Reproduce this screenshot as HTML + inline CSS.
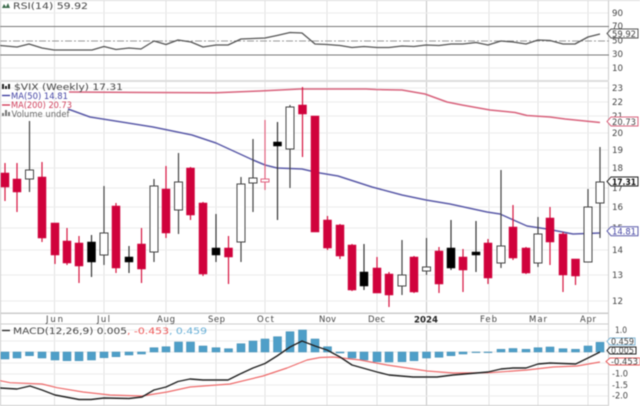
<!DOCTYPE html>
<html><head><meta charset="utf-8"><style>
html,body{margin:0;padding:0;background:#fff;width:640px;height:406px;overflow:hidden}
svg{display:block;filter:blur(.45px)}
text{font-family:"DejaVu Sans","Liberation Sans",sans-serif;font-size:8.5px;fill:#444}
.g line{stroke:#ececec;stroke-width:1}
.v line{stroke:#e2e2e2;stroke-width:1}
.r line{stroke:#d6133f;stroke-width:1.2}.r rect{fill:#d0023c;stroke:#d0023c;stroke-width:.5}
.w line{stroke:#444;stroke-width:1.2}.w rect{fill:#fff;stroke:#444;stroke-width:1}
.b line{stroke:#333;stroke-width:1.2}.b rect{fill:#000;stroke:#000;stroke-width:.5}
.m rect{fill:#4f9fc8;stroke:#3f8bb2;stroke-width:.5}
polyline{fill:none;stroke-linejoin:round}
</style></head><body>
<svg width="640" height="406" viewBox="0 0 640 406" xmlns="http://www.w3.org/2000/svg">
<rect width="640" height="406" fill="#fff"/>
<g class="v">
<line x1="54.5" y1="0" x2="54.5" y2="313"/><line x1="104" y1="0" x2="104" y2="313"/><line x1="166" y1="0" x2="166" y2="313"/><line x1="216" y1="0" x2="216" y2="313"/><line x1="265" y1="0" x2="265" y2="313"/><line x1="327" y1="0" x2="327" y2="313"/><line x1="377" y1="0" x2="377" y2="313"/><line x1="489" y1="0" x2="489" y2="313"/><line x1="538" y1="0" x2="538" y2="313"/><line x1="588" y1="0" x2="588" y2="313"/>
<line x1="54.5" y1="324" x2="54.5" y2="406"/><line x1="104" y1="324" x2="104" y2="406"/><line x1="166" y1="324" x2="166" y2="406"/><line x1="216" y1="324" x2="216" y2="406"/><line x1="265" y1="324" x2="265" y2="406"/><line x1="327" y1="324" x2="327" y2="406"/><line x1="377" y1="324" x2="377" y2="406"/><line x1="489" y1="324" x2="489" y2="406"/><line x1="538" y1="324" x2="538" y2="406"/><line x1="588" y1="324" x2="588" y2="406"/>
<line x1="426.5" y1="0" x2="426.5" y2="313" style="stroke:#c4c4c4"/><line x1="426.5" y1="324" x2="426.5" y2="406" style="stroke:#c4c4c4"/>
</g>
<g class="g">
<line x1="0" y1="13" x2="608" y2="13"/><line x1="0" y1="68" x2="608" y2="68"/>
<line x1="0" y1="88" x2="608" y2="88"/><line x1="0" y1="102" x2="608" y2="102"/><line x1="0" y1="116" x2="608" y2="116"/><line x1="0" y1="133" x2="608" y2="133"/><line x1="0" y1="150" x2="608" y2="150"/><line x1="0" y1="168" x2="608" y2="168"/><line x1="0" y1="188" x2="608" y2="188"/><line x1="0" y1="207" x2="608" y2="207"/><line x1="0" y1="228" x2="608" y2="228"/><line x1="0" y1="250" x2="608" y2="250"/><line x1="0" y1="275" x2="608" y2="275"/><line x1="0" y1="301" x2="608" y2="301"/>
<line x1="0" y1="330" x2="608" y2="330"/><line x1="0" y1="341" x2="608" y2="341"/><line x1="0" y1="352" x2="608" y2="352"/><line x1="0" y1="363" x2="608" y2="363"/><line x1="0" y1="374" x2="608" y2="374"/><line x1="0" y1="385" x2="608" y2="385"/><line x1="0" y1="396" x2="608" y2="396"/>
</g>
<!-- frame -->
<rect x="0" y="0" width="640" height="1" fill="#ddd"/>
<rect x="0" y="0" width="1" height="406" fill="#ccc"/>
<rect x="608" y="0" width="1" height="406" fill="#ccc"/>
<rect x="0" y="80" width="609" height="2" fill="#ddd"/>
<rect x="0" y="312.5" width="609" height="1.5" fill="#ccc"/>
<rect x="0" y="323.5" width="609" height="1" fill="#ccc"/>
<rect x="0" y="405" width="609" height="1" fill="#ccc"/>
<!-- RSI -->
<line x1="0" y1="26.5" x2="609" y2="26.5" stroke="#777" stroke-width="1"/>
<line x1="0" y1="55" x2="609" y2="55" stroke="#777" stroke-width="1"/>
<line x1="0" y1="41" x2="609" y2="41" stroke="#999" stroke-width="1" stroke-dasharray="7 2 2 2"/>
<polyline stroke="#555" stroke-width="1.3" points="0,45.5 17,47 29,44 42,48 54,50 92,50 104,46.5 116,49.5 129,48 141,49 154,41 166,44.5 178,40 191,42 203,47 216,45 228,45 241,39 253,38.5 265,38 277,35.5 290,32.5 302,33 315,44 327,44.5 340,45.5 352,47.5 364,46.5 377,47.5 389,47.5 402,46 414,46.5 426,45 439,45.5 451,44 463,44 476,42.5 488,45 501,41 513,42 526,44 538,40 550,40.5 563,44 575,44 588,37 600,34"/>
<path d="M2 8 L4 4 L6 7 L8 3 L10 8 Z" fill="#3a6a4a"/>
<text x="13" y="9" textLength="75" lengthAdjust="spacingAndGlyphs">RSI(14) 59.92</text>
<!-- MAs -->
<polyline stroke="#d8627c" stroke-width="1.5" points="69,92 150,92.5 216,92.7 260,91 300,89 366,89 376,89.5 402,90 425,94 447,102 462,105 490,110 515,112.5 527,115.5 550,117 565,119 600,122.5"/>
<polyline stroke="#5a5aa8" stroke-width="1.5" points="68,109 90,117 153,127 192,135 216,143 253,160 265,165 277,168 302,169 315,172 320,173 338,176 372,187 402,195 426,200 450,204 487,212 500,214 527,226 547,229 573,234 600,233"/>
<!-- Candles -->
<g class="r"><line x1="5" y1="163" x2="5" y2="201"/><rect x="1" y="173" width="8" height="14"/></g>
<g class="r"><line x1="17" y1="163" x2="17" y2="212"/><rect x="13" y="179" width="8" height="13"/></g>
<g class="w"><line x1="29.5" y1="121" x2="29.5" y2="192"/><rect x="25.5" y="170" width="8" height="9"/></g>
<g class="r"><line x1="42" y1="162" x2="42" y2="242"/><rect x="38" y="177" width="8" height="61"/></g>
<g class="r"><line x1="55" y1="223" x2="55" y2="264"/><rect x="51" y="223" width="8" height="32"/></g>
<g class="r"><line x1="67" y1="228" x2="67" y2="265"/><rect x="63" y="241" width="8" height="22"/></g>
<g class="r"><line x1="79" y1="236" x2="79" y2="283"/><rect x="75" y="243" width="8" height="23"/></g>
<g class="b"><line x1="91.5" y1="235" x2="91.5" y2="277"/><rect x="87.5" y="242" width="8" height="20"/></g>
<g class="w"><line x1="104" y1="186" x2="104" y2="265"/><rect x="100" y="233" width="8" height="22"/></g>
<g class="r"><line x1="116" y1="203" x2="116" y2="273"/><rect x="112" y="206" width="8" height="62"/></g>
<g class="b"><line x1="129" y1="246" x2="129" y2="273"/><rect x="125" y="257" width="8" height="5"/></g>
<g class="r"><line x1="141.5" y1="228" x2="141.5" y2="283"/><rect x="137.5" y="244" width="8" height="25"/></g>
<g class="w"><line x1="154" y1="179" x2="154" y2="262"/><rect x="150" y="186" width="8" height="66"/></g>
<g class="r"><line x1="166" y1="166" x2="166" y2="238"/><rect x="162" y="189" width="8" height="44"/></g>
<g class="w"><line x1="178.5" y1="153" x2="178.5" y2="234"/><rect x="174.5" y="182" width="8" height="28"/></g>
<g class="r"><line x1="190.5" y1="167" x2="190.5" y2="220"/><rect x="186.5" y="168" width="8" height="47"/></g>
<g class="r"><line x1="203" y1="202" x2="203" y2="276"/><rect x="199" y="203" width="8" height="71"/></g>
<g class="b"><line x1="216" y1="214" x2="216" y2="262"/><rect x="212" y="248" width="8" height="7"/></g>
<g class="r"><line x1="228.5" y1="236" x2="228.5" y2="284"/><rect x="224.5" y="248" width="8" height="9"/></g>
<g class="w"><line x1="241" y1="177" x2="241" y2="262"/><rect x="237" y="184" width="8" height="58"/></g>
<g class="w"><line x1="253" y1="139" x2="253" y2="212"/><rect x="249" y="178" width="8" height="5"/></g>
<g><line x1="265" y1="120" x2="265" y2="190" stroke="#e0607e" stroke-width="1.2"/><rect x="261" y="179" width="8" height="3" fill="#fff" stroke="#e0607e"/></g>
<g class="b"><line x1="277.5" y1="122" x2="277.5" y2="220"/><rect x="273.5" y="142" width="8" height="4"/></g>
<g class="w"><line x1="290" y1="105" x2="290" y2="188"/><rect x="286" y="107" width="8" height="42"/></g>
<g class="r"><line x1="302.5" y1="87" x2="302.5" y2="157"/><rect x="298.5" y="105" width="8" height="9"/></g>
<g class="r"><line x1="315" y1="116" x2="315" y2="232"/><rect x="311" y="116" width="8" height="116"/></g>
<g class="r"><line x1="327.5" y1="216" x2="327.5" y2="250"/><rect x="323.5" y="220" width="8" height="28"/></g>
<g class="r"><line x1="340" y1="224" x2="340" y2="259"/><rect x="336" y="225" width="8" height="31"/></g>
<g class="r"><line x1="352" y1="244" x2="352" y2="291"/><rect x="348" y="245" width="8" height="45"/></g>
<g class="b"><line x1="364" y1="244" x2="364" y2="290"/><rect x="360" y="272" width="8" height="14"/></g>
<g class="r"><line x1="377" y1="257" x2="377" y2="293"/><rect x="373" y="268" width="8" height="25"/></g>
<g class="r"><line x1="389" y1="272" x2="389" y2="307"/><rect x="385" y="274" width="8" height="21"/></g>
<g class="w"><line x1="402" y1="240" x2="402" y2="295"/><rect x="398" y="275" width="8" height="11"/></g>
<g class="r"><line x1="414" y1="256" x2="414" y2="293"/><rect x="410" y="257" width="8" height="35"/></g>
<g class="w"><line x1="426.5" y1="238" x2="426.5" y2="275"/><rect x="422.5" y="267" width="8" height="4"/></g>
<g class="r"><line x1="439" y1="247" x2="439" y2="293"/><rect x="435" y="251" width="8" height="33"/></g>
<g class="b"><line x1="451" y1="220" x2="451" y2="270"/><rect x="447" y="248" width="8" height="20"/></g>
<g class="r"><line x1="463" y1="249" x2="463" y2="292"/><rect x="459" y="257" width="8" height="13"/></g>
<g class="b"><line x1="476" y1="221" x2="476" y2="272"/><rect x="472" y="252" width="8" height="3"/></g>
<g class="r"><line x1="488" y1="239" x2="488" y2="284"/><rect x="484" y="243" width="8" height="35"/></g>
<g class="w"><line x1="501" y1="170" x2="501" y2="268"/><rect x="497" y="246" width="8" height="17"/></g>
<g class="r"><line x1="513" y1="205" x2="513" y2="260"/><rect x="509" y="227" width="8" height="31"/></g>
<g class="r"><line x1="526" y1="247" x2="526" y2="274"/><rect x="522" y="248" width="8" height="25"/></g>
<g class="w"><line x1="538" y1="217" x2="538" y2="267"/><rect x="534" y="234" width="8" height="29"/></g>
<g class="r"><line x1="550" y1="207" x2="550" y2="265"/><rect x="546" y="218" width="8" height="24"/></g>
<g class="r"><line x1="563" y1="232" x2="563" y2="292"/><rect x="559" y="234" width="8" height="41"/></g>
<g class="r"><line x1="575.5" y1="259" x2="575.5" y2="285"/><rect x="571.5" y="259" width="8" height="17"/></g>
<g class="w"><line x1="588" y1="189" x2="588" y2="262"/><rect x="584" y="207" width="8" height="55"/></g>
<g class="w"><line x1="600" y1="147" x2="600" y2="238"/><rect x="596" y="182" width="8" height="21"/></g>
<!-- Price legend -->
<path d="M2 84h2v5H2zM5 86h2v3H5zM8 84h2v5H8z" fill="#222"/>
<text x="14" y="90" textLength="109" lengthAdjust="spacingAndGlyphs">$VIX (Weekly) 17.31</text>
<line x1="2" y1="95.5" x2="10" y2="95.5" stroke="#33339a" stroke-width="1.3"/>
<text x="11" y="99" textLength="57" lengthAdjust="spacingAndGlyphs" style="fill:#4545a5">MA(50) 14.81</text>
<line x1="2" y1="105" x2="10" y2="105" stroke="#d0324f" stroke-width="1.3"/>
<text x="11" y="108" textLength="61" lengthAdjust="spacingAndGlyphs" style="fill:#d0405c">MA(200) 20.73</text>
<path d="M2 116v-3h2v3zM5 116v-6h2v6zM8 116v-4h2v4z" fill="#777"/>
<text x="11.5" y="117" textLength="58" lengthAdjust="spacingAndGlyphs" style="fill:#666">Volume undef</text>
<!-- month labels -->
<g>
<text x="46" y="322" textLength="17" lengthAdjust="spacing">Jun</text>
<text x="97" y="322" textLength="13" lengthAdjust="spacing">Jul</text>
<text x="157" y="322" textLength="18" lengthAdjust="spacing">Aug</text>
<text x="208" y="322" textLength="17" lengthAdjust="spacing">Sep</text>
<text x="257" y="322" textLength="17" lengthAdjust="spacing">Oct</text>
<text x="319" y="322" textLength="17" lengthAdjust="spacing">Nov</text>
<text x="368" y="322" textLength="17" lengthAdjust="spacing">Dec</text>
<text x="414" y="322.5" textLength="24" lengthAdjust="spacingAndGlyphs" style="font-weight:700;fill:#222">2024</text>
<text x="480" y="322" textLength="17" lengthAdjust="spacing">Feb</text>
<text x="529" y="322" textLength="18" lengthAdjust="spacing">Mar</text>
<text x="580" y="322" textLength="16" lengthAdjust="spacing">Apr</text>
</g>
<!-- MACD bars -->
<g class="m">
<rect x="1" y="352" width="8" height="7"/><rect x="13" y="352" width="8" height="6"/><rect x="25.5" y="352" width="8" height="3.7"/><rect x="38" y="352" width="8" height="6"/><rect x="51" y="352" width="8" height="8"/><rect x="63" y="352" width="8" height="8.7"/><rect x="75" y="352" width="8" height="8.7"/><rect x="87.5" y="352" width="8" height="8"/><rect x="100" y="352" width="8" height="5.7"/><rect x="112" y="352" width="8" height="4.7"/><rect x="125" y="352" width="8" height="3"/><rect x="137.5" y="352" width="8" height="2"/>
<rect x="150" y="347.7" width="8" height="4.3"/><rect x="162" y="346.7" width="8" height="5.3"/><rect x="174.5" y="342" width="8" height="10"/><rect x="186.5" y="342" width="8" height="10"/><rect x="199" y="346" width="8" height="6"/><rect x="212" y="347.7" width="8" height="4.3"/><rect x="224.5" y="348.7" width="8" height="3.3"/><rect x="237" y="343.7" width="8" height="8.3"/><rect x="249" y="341" width="8" height="11"/><rect x="261" y="339" width="8" height="13"/><rect x="273.5" y="336.7" width="8" height="15.3"/><rect x="286" y="331.7" width="8" height="20.3"/><rect x="298.5" y="330" width="8" height="22"/><rect x="311" y="339" width="8" height="13"/><rect x="323.5" y="346.7" width="8" height="5.3"/>
<rect x="336" y="352" width="8" height="1"/><rect x="348" y="352" width="8" height="6"/><rect x="360" y="352" width="8" height="8"/><rect x="373" y="352" width="8" height="9.7"/><rect x="385" y="352" width="8" height="10"/><rect x="398" y="352" width="8" height="9.7"/><rect x="410" y="352" width="8" height="8.7"/><rect x="422.5" y="352" width="8" height="6"/><rect x="435" y="352" width="8" height="5.3"/><rect x="447" y="352" width="8" height="3.7"/><rect x="459" y="352" width="8" height="2"/><rect x="472" y="352" width="8" height=".6"/><rect x="484" y="352" width="8" height=".6"/>
<rect x="497" y="349.3" width="8" height="2.7"/><rect x="509" y="348.5" width="8" height="3.5"/><rect x="522" y="349.3" width="8" height="2.7"/><rect x="534" y="347.7" width="8" height="4.3"/><rect x="546" y="347" width="8" height="5"/><rect x="559" y="348.7" width="8" height="3.3"/><rect x="571.5" y="349.3" width="8" height="2.7"/><rect x="584" y="346" width="8" height="6"/><rect x="596" y="342.3" width="8" height="9.7"/>
</g>
<polyline stroke="#ee6b6b" stroke-width="1.2" points="0,380.7 10,382.7 42,384 57,387.7 83,392 110,395 142,396 167,392 190,387 230,384 263,376 287,368 307,360 320,357.5 333,357 360,360 387,365 427,371 453,373 490,372.7 527,370 553,367 577,366 600,362"/>
<polyline stroke="#222" stroke-width="1.4" points="0,388 17,389 30,386 42,390 55,395 79,399.5 91,399.5 104,398 129,398.5 142,397 154,390 166,387 178,381.5 190,379 203,380 228,380 240,374 253,368 265,363.5 277,356 290,347 302,341 315,346 327,350 340,357 352,365 377,372 389,375 413,377 437,377 453,375 488,372 501,369 513,368 526,368 538,364 550,363 575.7,364 588,358 600,352"/>
<line x1="2" y1="330.5" x2="10" y2="330.5" stroke="#222" stroke-width="1.3"/>
<text x="13" y="334" textLength="114" lengthAdjust="spacingAndGlyphs">MACD(12,26,9) 0.005</text>
<text x="127" y="334" textLength="42" lengthAdjust="spacingAndGlyphs" style="fill:#ee5555">, -0.453</text>
<text x="169" y="334" textLength="38" lengthAdjust="spacingAndGlyphs" style="fill:#66aed6">, 0.459</text>
<!-- Right axis -->
<g>
<text x="612" y="16" textLength="11" lengthAdjust="spacingAndGlyphs">90</text>
<text x="612" y="29" textLength="11" lengthAdjust="spacingAndGlyphs">70</text>
<text x="612" y="43.5" textLength="11" lengthAdjust="spacingAndGlyphs">50</text>
<text x="612" y="57" textLength="11" lengthAdjust="spacingAndGlyphs">30</text>
<text x="612" y="71" textLength="11" lengthAdjust="spacingAndGlyphs">10</text>
<text x="612" y="91" textLength="11" lengthAdjust="spacingAndGlyphs">23</text>
<text x="612" y="105" textLength="11" lengthAdjust="spacingAndGlyphs">22</text>
<text x="612" y="119" textLength="11" lengthAdjust="spacingAndGlyphs">21</text>
<text x="612" y="136" textLength="11" lengthAdjust="spacingAndGlyphs">20</text>
<text x="612" y="153" textLength="11" lengthAdjust="spacingAndGlyphs">19</text>
<text x="612" y="171" textLength="11" lengthAdjust="spacingAndGlyphs">18</text>
<text x="612" y="191" textLength="11" lengthAdjust="spacingAndGlyphs">17</text>
<text x="612" y="210" textLength="11" lengthAdjust="spacingAndGlyphs">16</text>
<text x="612" y="231" textLength="11" lengthAdjust="spacingAndGlyphs">15</text>
<text x="612" y="253" textLength="11" lengthAdjust="spacingAndGlyphs">14</text>
<text x="612" y="278" textLength="11" lengthAdjust="spacingAndGlyphs">13</text>
<text x="612" y="304" textLength="11" lengthAdjust="spacingAndGlyphs">12</text>
<text x="615" y="333" textLength="12" lengthAdjust="spacingAndGlyphs">1.0</text>
<text x="612" y="376.5" textLength="16" lengthAdjust="spacingAndGlyphs">-1.0</text>
<text x="612" y="388" textLength="16" lengthAdjust="spacingAndGlyphs">-1.5</text>
<text x="612" y="398.5" textLength="16" lengthAdjust="spacingAndGlyphs">-2.0</text>
</g>
<!-- Tags -->
<path d="M607 33.5 L611 29 H638 V38 H611 Z" fill="#fff" fill-opacity=".3" stroke="#555"/>
<text x="612" y="37" textLength="24" lengthAdjust="spacingAndGlyphs">59.92</text>
<path d="M607 121.5 L611 117 H638 V126 H611 Z" fill="#fff" stroke="#d8627c"/>
<text x="612" y="125" textLength="24" lengthAdjust="spacingAndGlyphs">20.73</text>
<path d="M607 181.5 L611 177 H638 V186 H611 Z" fill="#fff" stroke="#222"/>
<text x="612" y="185" textLength="24" lengthAdjust="spacingAndGlyphs" style="font-weight:700;fill:#111">17.31</text>
<path d="M607 231 L611 226.7 H638 V235.7 H611 Z" fill="#fff" stroke="#5a5aa8"/>
<text x="612" y="234.5" textLength="24" lengthAdjust="spacingAndGlyphs" style="fill:#4545a5">14.81</text>
<path d="M607 341.5 L610 338 H635 V345 H610 Z" fill="#fff" stroke="#7fb6d6"/>
<text x="611" y="344.5" textLength="23" lengthAdjust="spacingAndGlyphs">0.459</text>
<path d="M607 350.5 L610 347 H636 V354 H610 Z" fill="#fff" stroke="#222"/>
<text x="611" y="353.5" textLength="23" lengthAdjust="spacingAndGlyphs">0.005</text>
<path d="M606 361.5 L610 358 H640 V365 H610 Z" fill="#fff" stroke="#e85a5a"/>
<text x="611" y="364.5" textLength="27" lengthAdjust="spacingAndGlyphs">-0.453</text>
</svg>
</body></html>
